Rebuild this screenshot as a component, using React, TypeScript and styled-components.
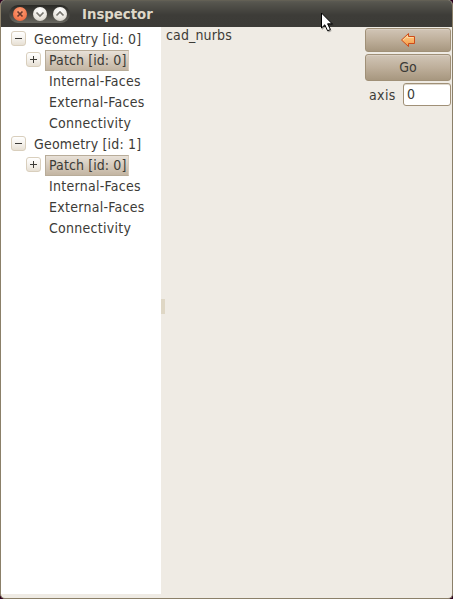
import React from 'react';
import styled, { createGlobalStyle } from 'styled-components';

const Global = createGlobalStyle`
  html, body { margin: 0; padding: 0; background: #2c001e; }
  * { box-sizing: border-box; }
`;

const Window = styled.main`
  width: 453px;
  height: 599px;
  display: flex;
  flex-direction: column;
  overflow: hidden;
  border: 1px solid #8b8069;
  border-top: 0;
  border-radius: 5px;
  background: #efebe4;
  color: #3c3b37;
  font-family: 'DejaVu Sans Condensed', 'DejaVu Sans', sans-serif;
  font-stretch: condensed;
  font-size: 14px;
`;

const TitleBar = styled.header`
  flex: 0 0 27px;
  display: flex;
  align-items: center;
  padding: 1px 0 0 8px;
  background: linear-gradient(#6b6657 0, #5b5a53 1px, #55544d 3px, #3d3c38 15px, #3c3b37 100%);
`;

const WindowControls = styled.div`
  display: flex;
  align-items: center;
  gap: 6px;
  width: 61px;
  height: 18px;
  padding: 0 3px 0 4px;
  border-radius: 9px;
  background: linear-gradient(#292925, #4a4944 60%, #696861);
`;

const ControlButton = styled.button<{ $close?: boolean }>`
  flex: none;
  width: 14px;
  height: 14px;
  padding: 0;
  border: 0;
  border-radius: 50%;
  display: flex;
  background: ${p => p.$close
    ? 'radial-gradient(circle at 50% 35%, #ffa078, #f47a50 60%, #dc5833)'
    : 'radial-gradient(circle at 50% 25%, #ffffff, #e9e6df 60%, #c2beb4)'};
`;

const Title = styled.h1`
  margin: 2px 0 0 12px;
  font: bold 13.3px/18px 'DejaVu Sans', sans-serif;
  font-stretch: normal;
  color: #dfd8c8;
`;

const Body = styled.div`
  flex: 1;
  min-height: 0;
  display: flex;
  padding-bottom: 4px;
`;

const Tree = styled.nav`
  width: 160px;
  padding-top: 2px;
  background: #fff;
`;

const TreeRow = styled.div<{ $level: number }>`
  display: flex;
  height: 21px;
  padding-left: ${p => [10, 25, 44][p.$level]}px;
  letter-spacing: ${p => [0.19, 0.1, 0.28][p.$level]}px;
`;

const Toggle = styled.button`
  width: 15px;
  height: 15px;
  margin: 2px 4px 0 0;
  padding: 0;
  border: 1px solid #d9cfbd;
  border-radius: 3px;
  display: flex;
  background: linear-gradient(#fff, #f5f2ed 50%, #e7e0d4);
`;

const Label = styled.span<{ $selected?: boolean }>`
  height: 21px;
  padding: 0 4px;
  line-height: 21px;
  white-space: nowrap;
  ${p => p.$selected && `
    width: 84px;
    padding: 0 3px;
    border: 1px solid #b8ac99;
    border-right-color: #d6cbbc;
    line-height: 19px;
    background: linear-gradient(#e8e1d8, #d5cabc 50%, #c3b5a2);
  `}
`;

const Splitter = styled.div`
  width: 4px;
  display: flex;
  align-items: center;
`;

const Grip = styled.div`
  width: 4px;
  height: 15px;
  margin-top: -9px;
  background: #dfd7c5;
`;

const Content = styled.section`
  flex: 1;
  padding-left: 1px;
  line-height: 17px;
  letter-spacing: 0.14px;
`;

const Controls = styled.aside`
  width: 87px;
  padding-top: 1px;
`;

const ActionButton = styled.button<{ $height: number }>`
  width: 86px;
  height: ${p => p.$height}px;
  margin-bottom: 2px;
  padding: 0;
  display: flex;
  align-items: center;
  justify-content: center;
  border: 1px solid #a09077;
  border-radius: 3px;
  color: #3c3b37;
  font: inherit;
  background: linear-gradient(#d1c5b6, #bfb09c 48%, #a7977f);
  box-shadow: inset 0 1px #d9cec2;

  & + & {
    padding-bottom: 2px;
  }
`;

const Field = styled.label`
  display: flex;
  align-items: center;
  justify-content: space-between;
  width: 86px;
  padding-left: 4px;
  letter-spacing: 0.4px;
`;

const Input = styled.input`
  width: 48px;
  height: 23px;
  padding: 0 3px 1px;
  border: 1px solid #a09077;
  border-radius: 3px;
  outline: 0;
  background: #fff;
  box-shadow: inset 0 1px #ded8ce;
  color: #3c3b37;
  font: inherit;
`;

const Cursor = styled.svg`
  position: absolute;
  left: 320px;
  top: 12px;
`;

const controlPaths = ['M4.5 4.5 9.5 9.5M9.5 4.5 4.5 9.5', 'M3.5 5.5 7 9 10.5 5.5', 'M3.5 8.5 7 5 10.5 8.5'];

const rows = [
  { text: 'Geometry [id: 0]', level: 0 },
  { text: 'Patch [id: 0]', level: 1 },
  { text: 'Internal-Faces', level: 2 },
  { text: 'External-Faces', level: 2 },
  { text: 'Connectivity', level: 2 },
  { text: 'Geometry [id: 1]', level: 0 },
  { text: 'Patch [id: 0]', level: 1 },
  { text: 'Internal-Faces', level: 2 },
  { text: 'External-Faces', level: 2 },
  { text: 'Connectivity', level: 2 },
];

export default function App() {
  return (
    <>
      <Global />
      <Window>
        <TitleBar>
          <WindowControls>
            {controlPaths.map((d, i) => (
              <ControlButton key={d} $close={i === 0}>
                <svg width="14" height="14"><path d={d} fill="none" stroke={i ? '#77756e' : '#69382b'} strokeWidth="1.7" /></svg>
              </ControlButton>
            ))}
          </WindowControls>
          <Title>Inspector</Title>
        </TitleBar>
        <Body>
          <Tree>
            {rows.map((row, i) => (
              <TreeRow key={i} $level={row.level}>
                {row.level < 2 && (
                  <Toggle>
                    <svg width="13" height="13">
                      <path d={row.level === 0 ? 'M3 6.5h7' : 'M3 6.5h7M6.5 3v7'} stroke="#3c3b37" />
                    </svg>
                  </Toggle>
                )}
                <Label $selected={row.level === 1}>{row.text}</Label>
              </TreeRow>
            ))}
          </Tree>
          <Splitter><Grip /></Splitter>
          <Content>cad_nurbs</Content>
          <Controls>
            <ActionButton $height={24} aria-label="Back">
              <svg width="16" height="16">
                <defs><linearGradient id="arrow" x2="0" y2="1"><stop stopColor="#ffd08c" /><stop offset="1" stopColor="#f39a46" /></linearGradient></defs>
                <path d="M1.5 8 8.5 1.5v3h6v7h-6v3Z" fill="url(#arrow)" stroke="#ce4b19" />
                <path d="M3 8 7.5 4V5.5h6" fill="none" stroke="#ffe0aa" strokeWidth=".8" />
              </svg>
            </ActionButton>
            <ActionButton $height={27}>Go</ActionButton>
            <Field>axis<Input defaultValue="0" /></Field>
          </Controls>
        </Body>
      </Window>
      <Cursor width="15" height="22">
        <path d="M2 2v16l3.8-3.5 2.8 6 3-1.4-2.8-5.8H14Z" fill="#000" opacity=".3" />
        <path d="M1.5 1v15l3.3-3.2 2.8 6 2.8-1.3-2.8-5.7h4.6Z" fill="#fff" stroke="#000" />
      </Cursor>
    </>
  );
}
